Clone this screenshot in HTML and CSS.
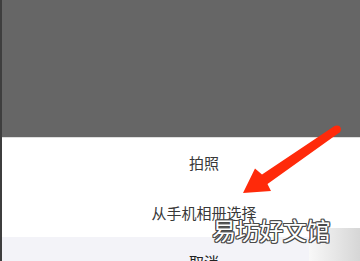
FILE: index.html
```html
<!DOCTYPE html>
<html lang="zh-CN">
<head>
<meta charset="utf-8">
<title>Action sheet</title>
<link rel="stylesheet" href="styles.css">
</head>
<body>
<div class="screen">
  <div class="edge"></div>
  <div class="main">
    <div class="mask"></div>
    <div class="sheet">
      <div class="item item-first">拍照</div>
      <div class="item">从手机相册选择</div>
      <div class="cancel">取消</div>
    </div>
  </div>
  <div class="wm-bg"></div>
  <svg class="arrow" width="360" height="261" viewBox="0 0 360 261" xmlns="http://www.w3.org/2000/svg">
    <polygon fill="#ff2a0a" points="243,193 255,168.5 262,174.5 334.5,126 339.5,132.5 267.5,184 271,191"/>
    <circle fill="#ff2a0a" cx="337" cy="129.3" r="3.9"/>
  </svg>
  <div class="watermark">易坊好文馆</div>
</div>
</body>
</html>
```
FILE: styles.css
```css
html, body {
  margin: 0;
  padding: 0;
  background: #ffffff;
}
.screen {
  position: relative;
  width: 360px;
  height: 261px;
  overflow: hidden;
  display: flex;
  font-family: "Noto Sans CJK SC", "Noto Sans", sans-serif;
}
.edge {
  width: 2px;
  flex: none;
  background: #3e3e3e;
}
.main {
  flex: 1;
  display: flex;
  flex-direction: column;
}
.mask {
  height: 137px;
  flex: none;
  background: #666666;
  border-bottom: 1px solid #dedede;
}
.sheet {
  flex: 1;
  display: flex;
  flex-direction: column;
  background: #ffffff;
}
.item {
  height: 50px;
  display: flex;
  align-items: center;
  justify-content: center;
  padding-left: 46px;
  font-size: 15px;
  color: #383838;
}
.item-first {
  height: 49px;
}
.cancel {
  flex: 1;
  background: #f3f3f8;
  padding-left: 46px;
  padding-top: 15px;
  text-align: center;
  font-size: 15px;
  line-height: 20px;
  color: #222222;
}
.wm-bg {
  position: absolute;
  left: 309px;
  top: 228px;
  width: 51px;
  height: 33px;
  background: linear-gradient(to right, #f8f8f8, #d6d6d6);
}
.arrow {
  position: absolute;
  left: 0;
  top: 0;
}
.watermark {
  position: absolute;
  left: 212px;
  top: 216px;
  font-size: 24px;
  line-height: 28px;
  color: #ffffff;
  letter-spacing: -0.4px;
  text-shadow:
    1px 0 0 #4a4a4a, -1px 0 0 #4a4a4a, 0 1px 0 #4a4a4a, 0 -1px 0 #4a4a4a,
    1px 1px 0 #4a4a4a, -1px -1px 0 #4a4a4a, 1px -1px 0 #4a4a4a, -1px 1px 0 #4a4a4a;
}
```
